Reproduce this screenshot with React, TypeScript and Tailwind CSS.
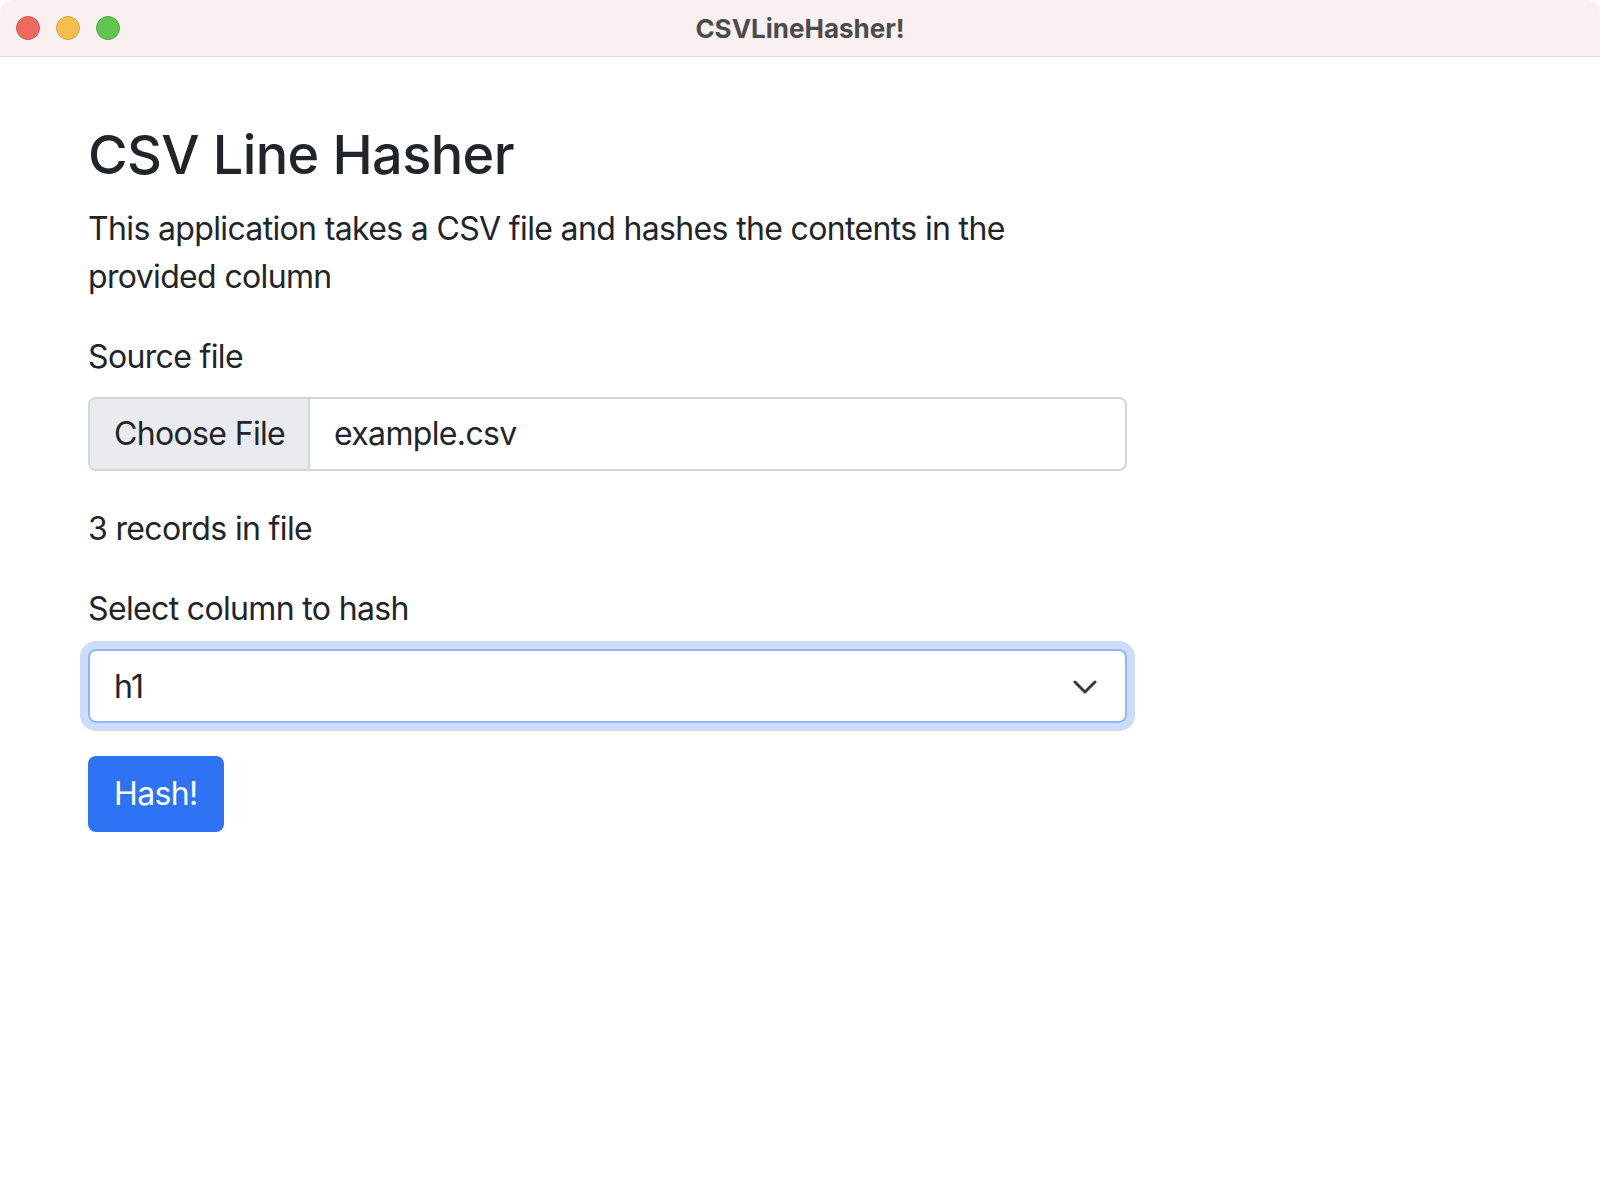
const TrafficLights = () => (
  <div className="flex items-center gap-4 pl-4">
    <span className="w-6 h-6 rounded-full bg-[#ee6a5f] border border-[#d6584e]" />
    <span className="w-6 h-6 rounded-full bg-[#f5bf4f] border border-[#d9a33e]" />
    <span className="w-6 h-6 rounded-full bg-[#61c554] border border-[#4fa944]" />
  </div>
);

const App = () => {
  return (
    <div className="w-[1600px] h-[1200px] bg-white font-['Inter','Liberation_Sans',sans-serif] text-[#212529]">
      {/* window title bar */}
      <div className="relative h-[57px] bg-[#f9f0f1] border-b border-[#dcdcdc] rounded-t-[12px] flex items-center">
        <TrafficLights />
        <div className="absolute inset-0 flex items-center justify-center text-[26px] font-bold text-[#4b4b4b]">
          CSVLineHasher!
        </div>
      </div>

      {/* content */}
      <div className="w-[1039px] ml-[88px] pt-[66px]">
        <h1 className="text-[54px] leading-[64px] font-medium tracking-[-0.6px] mb-[18px]">
          CSV Line Hasher
        </h1>
        <p className="text-[32px] leading-[48px] mb-[32px] tracking-[-0.65px]">
          This application takes a CSV file and hashes the contents in the provided column
        </p>

        <form className="flex flex-col">
          <label className="text-[32px] leading-[48px] mb-[16px] tracking-[-0.65px]">Source file</label>
          <div className="flex h-[74px] border-2 border-[#d3d6d9] rounded-[8px] overflow-hidden text-[32px] tracking-[-0.65px]">
            <div className="w-[220px] shrink-0 whitespace-nowrap flex items-center px-6 bg-[#e9ebee] border-r-2 border-[#d3d6d9]">
              Choose File
            </div>
            <div className="flex items-center px-6 whitespace-nowrap">example.csv</div>
          </div>

          <p className="text-[32px] leading-[48px] mt-[34px] mb-[32px] tracking-[-0.65px]">3 records in file</p>

          <label className="text-[32px] leading-[48px] mb-[16px] tracking-[-0.65px]">
            Select column to hash
          </label>
          <div className="h-[74px] border-2 border-[#8db6f8] rounded-[8px] ring-[8px] ring-[#cddcfb] flex items-center justify-between pl-6 pr-[28px] pt-[2px] text-[32px] tracking-[-0.65px]">
            <span>h1</span>
            <svg width="24" height="14" viewBox="0 0 24 14" fill="none" className="text-[#343a40]">
              <path d="M2 2L12 12L22 2" stroke="currentColor" strokeWidth="3" strokeLinecap="round" strokeLinejoin="round" />
            </svg>
          </div>

          <div className="mt-[33px]">
            <button
              type="button"
              className="h-[76px] px-[26px] rounded-[8px] bg-[#2e73f4] text-white text-[32px] tracking-[-0.65px]"
            >
              Hash!
            </button>
          </div>
        </form>
      </div>
    </div>
  );
};

export default App;
